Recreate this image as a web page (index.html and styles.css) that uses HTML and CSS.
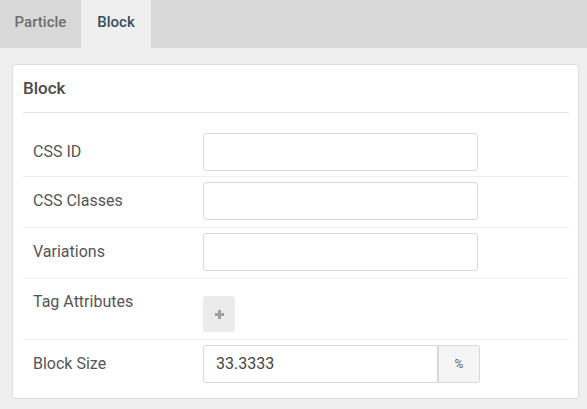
FILE: index.html
```html
<!DOCTYPE html>
<html>
<head>
<meta charset="utf-8">
<link rel="stylesheet" href="styles.css">
</head>
<body>
<div class="tabs">
  <div class="tab">Particle</div>
  <div class="tab tab-active">Block</div>
</div>
<div class="content">
  <div class="card">
    <div class="card-title">Block</div>
    <div class="fields">
      <div class="row row-first">
        <div class="label">CSS ID</div>
        <div class="control"><div class="input"></div></div>
      </div>
      <div class="row">
        <div class="label">CSS Classes</div>
        <div class="control"><div class="input"></div></div>
      </div>
      <div class="row">
        <div class="label">Variations</div>
        <div class="control"><div class="input"></div></div>
      </div>
      <div class="row row-top">
        <div class="label">Tag Attributes</div>
        <div class="control"><div class="add-btn"><svg width="9" height="9" viewBox="0 0 9 9"><path d="M3 0h3v3h3v3H6v3H3V6H0V3h3z" fill="#a0a0a0"/></svg></div></div>
      </div>
      <div class="row row-last">
        <div class="label">Block Size</div>
        <div class="control">
          <div class="group">
            <div class="input input-grouped">33.3333</div>
            <div class="addon">%</div>
          </div>
        </div>
      </div>
    </div>
  </div>
</div>
</body>
</html>
```
FILE: styles.css
```css
* { box-sizing: border-box; }
html, body { margin: 0; padding: 0; }
body {
  background: #efefef;
  font-family: Roboto, "Liberation Sans", Arial, sans-serif;
  width: 587px;
  height: 409px;
  overflow: hidden;
}
.tabs {
  display: flex;
  height: 48px;
  background: #d9d9d9;
}
.tab {
  display: flex;
  align-items: center;
  justify-content: center;
  width: 81px;
  height: 48px;
  padding-bottom: 5px;
  font-size: 15px;
  font-weight: 500;
  color: #6e6e6e;
}
.tab-active {
  width: 70px;
  background: #efefef;
  color: #34505e;
}
.content {
  padding: 16px 8px 0 12px;
}
.card {
  background: #fff;
  border: 1px solid #dcdcdc;
  border-radius: 3px;
  padding: 0 9px 7px 10px;
  height: 335px;
}
.card-title {
  height: 48px;
  padding-top: 13px;
  font-size: 17px;
  font-weight: 500;
  color: #4a4a4a;
  border-bottom: 1px solid #e8e8e8;
}
.fields {
  padding-top: 15px;
}
.row {
  display: flex;
  align-items: center;
  padding: 5px 0 7px 10px;
  border-bottom: 1px solid #efefef;
}
.row-first { padding-bottom: 5px; }
.row-top { align-items: flex-start; }
.row-last { border-bottom: none; }
.label {
  width: 170px;
  font-size: 16px;
  color: #555;
  line-height: 36px;
}
.control { display: flex; flex-direction: column; }
.input {
  width: 275px;
  height: 38px;
  border: 1px solid #d9d9d9;
  border-radius: 3px;
  background: #fff;
  font-size: 16px;
  color: #444;
  line-height: 36px;
  padding-left: 12px;
}
.add-btn {
  margin-top: 12px;
  width: 32px;
  height: 36px;
  background: #ebebeb;
  border-radius: 3px;
  display: flex;
  align-items: center;
  justify-content: center;
}
.group { display: flex; }
.input-grouped {
  width: 235px;
  border-radius: 3px 0 0 3px;
}
.addon {
  width: 42px;
  height: 38px;
  border: 1px solid #d9d9d9;
  border-radius: 0 3px 3px 0;
  background: #f5f5f5;
  color: #666;
  font-size: 12px;
  display: flex;
  align-items: center;
  justify-content: center;
}
```
